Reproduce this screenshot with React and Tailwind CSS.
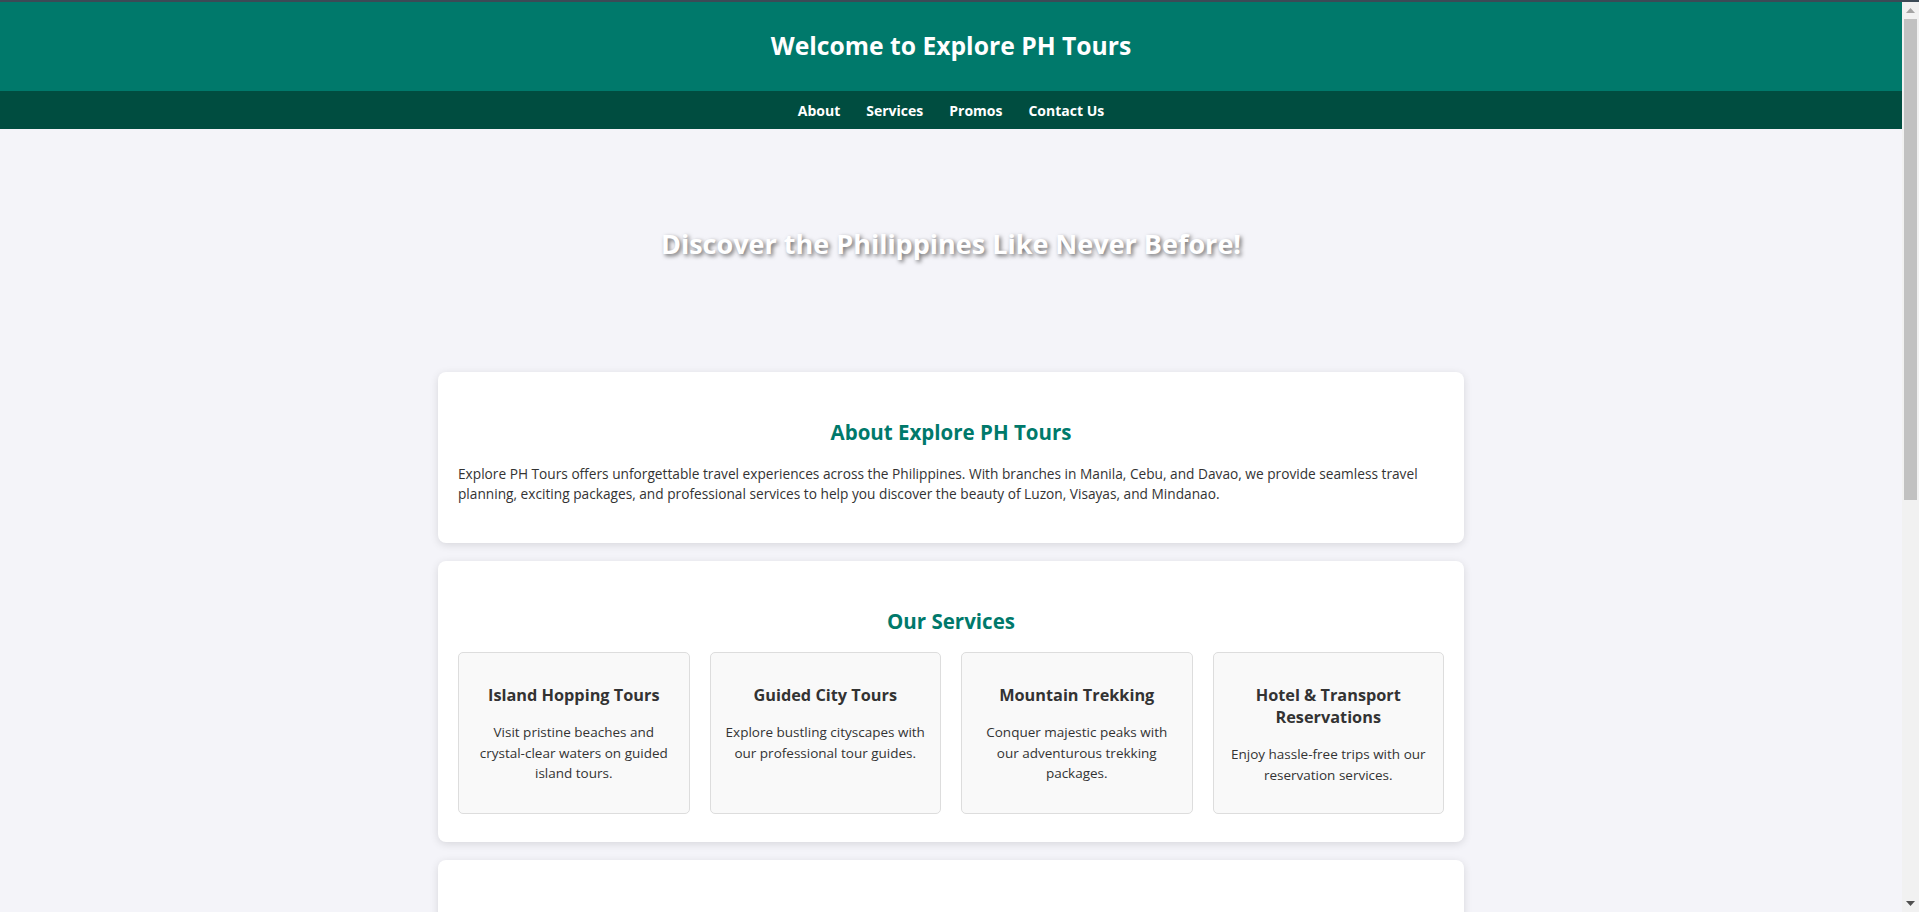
const services = [
  {
    title: "Island Hopping Tours",
    text: "Visit pristine beaches and crystal-clear waters on guided island tours.",
  },
  {
    title: "Guided City Tours",
    text: "Explore bustling cityscapes with our professional tour guides.",
  },
  {
    title: "Mountain Trekking",
    text: "Conquer majestic peaks with our adventurous trekking packages.",
  },
  {
    title: "Hotel & Transport Reservations",
    text: "Enjoy hassle-free trips with our reservation services.",
  },
];

const promos = [
  { title: "Summer Getaway", text: "Get 20% off on Boracay and Palawan packages this summer." },
  { title: "Group Discounts", text: "Travel with 5 or more friends and save up to 15%." },
  { title: "Early Bird Deals", text: "Book 3 months ahead and enjoy exclusive rates." },
];

const branches = [
  { title: "Manila", text: "Main office serving tours across Luzon." },
  { title: "Cebu", text: "Your gateway to the islands of the Visayas." },
  { title: "Davao", text: "Adventures and culture throughout Mindanao." },
];

function Section({ title, children, className = "" }) {
  return (
    <section
      className={`w-[1026px] mx-auto bg-white rounded-lg shadow-[0_2px_8px_rgba(0,0,0,0.12)] px-5 pt-[46px] ${className}`}
    >
      <h2 className="text-center text-[#00796b] text-[20.5px] leading-[28px] font-bold">{title}</h2>
      {children}
    </section>
  );
}

function Box({ title, text }) {
  return (
    <div className="bg-[#f9f9f9] border border-[#ddd] rounded-[5px] px-3 pt-[31px] pb-[28px] text-center">
      <h3 className="text-[16.3px] leading-[22px] font-bold">{title}</h3>
      <p className="mt-4 text-[13.5px] leading-[20.5px]">{text}</p>
    </div>
  );
}

// browser scrollbar as seen in the screenshot
function Scrollbar() {
  return (
    <div className="w-[17px] shrink-0 bg-[#f1f1f1] flex flex-col">
      <div className="h-[17px] flex items-center justify-center">
        <svg width="9" height="5" viewBox="0 0 9 5"><path d="M4.5 0L9 5H0z" fill="#a3a3a3" /></svg>
      </div>
      <div className="mx-[2px] h-[481px] bg-[#c1c1c1]"></div>
      <div className="flex-1"></div>
      <div className="h-[17px] flex items-center justify-center">
        <svg width="9" height="5" viewBox="0 0 9 5"><path d="M0 0H9L4.5 5z" fill="#505050" /></svg>
      </div>
    </div>
  );
}

export default function App() {
  return (
    <div className="bg-[#f4f4f9] text-[#333] font-['Open_Sans','Noto_Sans',sans-serif]">
      <div className="h-[2px] bg-[#3c4a56]"></div>
      <div className="h-[910px] flex">
        <div className="flex-1 min-w-0 overflow-hidden">
          {/* header */}
          <header className="bg-[#00796b] h-[89px] flex items-center justify-center">
            <h1 className="text-white text-[24.7px] font-bold leading-none">Welcome to Explore PH Tours</h1>
          </header>
          <nav className="bg-[#004d40] h-[38px] flex items-center justify-center gap-[26px]">
            <a href="#about" className="text-white text-[14px] font-bold">About</a>
            <a href="#services" className="text-white text-[14px] font-bold">Services</a>
            <a href="#promos" className="text-white text-[14px] font-bold">Promos</a>
            <a href="#contact" className="text-white text-[14px] font-bold">Contact Us</a>
          </nav>

          {/* hero */}
          <div className="h-[243px] flex items-start justify-center pt-[97px]">
            <h2 className="text-white text-[27px] leading-[36px] font-bold [text-shadow:2px_2px_4px_rgba(0,0,0,0.55)]">
              Discover the Philippines Like Never Before!
            </h2>
          </div>

          <div className="flex flex-col gap-[18px] pb-[20px]">
            <Section title="About Explore PH Tours" className="pb-[40px]">
              <p className="mt-[18px] text-[13.7px] leading-[19.5px]">
                Explore PH Tours offers unforgettable travel experiences across the Philippines. With branches in Manila, Cebu, and Davao, we provide seamless travel planning, exciting packages, and professional services to help you discover the beauty of Luzon, Visayas, and Mindanao.
              </p>
            </Section>

            <Section title="Our Services" className="pb-[28px]">
              <div className="mt-[17px] grid grid-cols-4 gap-5">
                {services.map((s) => (
                  <Box key={s.title} title={s.title} text={s.text} />
                ))}
              </div>
            </Section>

            <Section title="Special Promos" className="pb-[28px]">
              <div className="mt-[17px] grid grid-cols-3 gap-5">
                {promos.map((p) => (
                  <Box key={p.title} title={p.title} text={p.text} />
                ))}
              </div>
            </Section>

            <Section title="Our Branches" className="pb-[28px]">
              <div className="mt-[17px] grid grid-cols-3 gap-5">
                {branches.map((b) => (
                  <Box key={b.title} title={b.title} text={b.text} />
                ))}
              </div>
            </Section>

            <Section title="Contact Us" className="pb-[40px]">
              <div className="mt-[18px] text-[13.7px] leading-[22px] text-center">
                <p>Email: info@explorephtours.com</p>
                <p>Phone: +63 912 345 6789</p>
                <p>Offices: Manila | Cebu | Davao</p>
              </div>
            </Section>
          </div>

          <footer className="bg-[#00796b] text-white text-center text-[13px] py-[14px]">
            © 2025 Explore PH Tours. All rights reserved.
          </footer>
        </div>
        <Scrollbar />
      </div>
    </div>
  );
}
